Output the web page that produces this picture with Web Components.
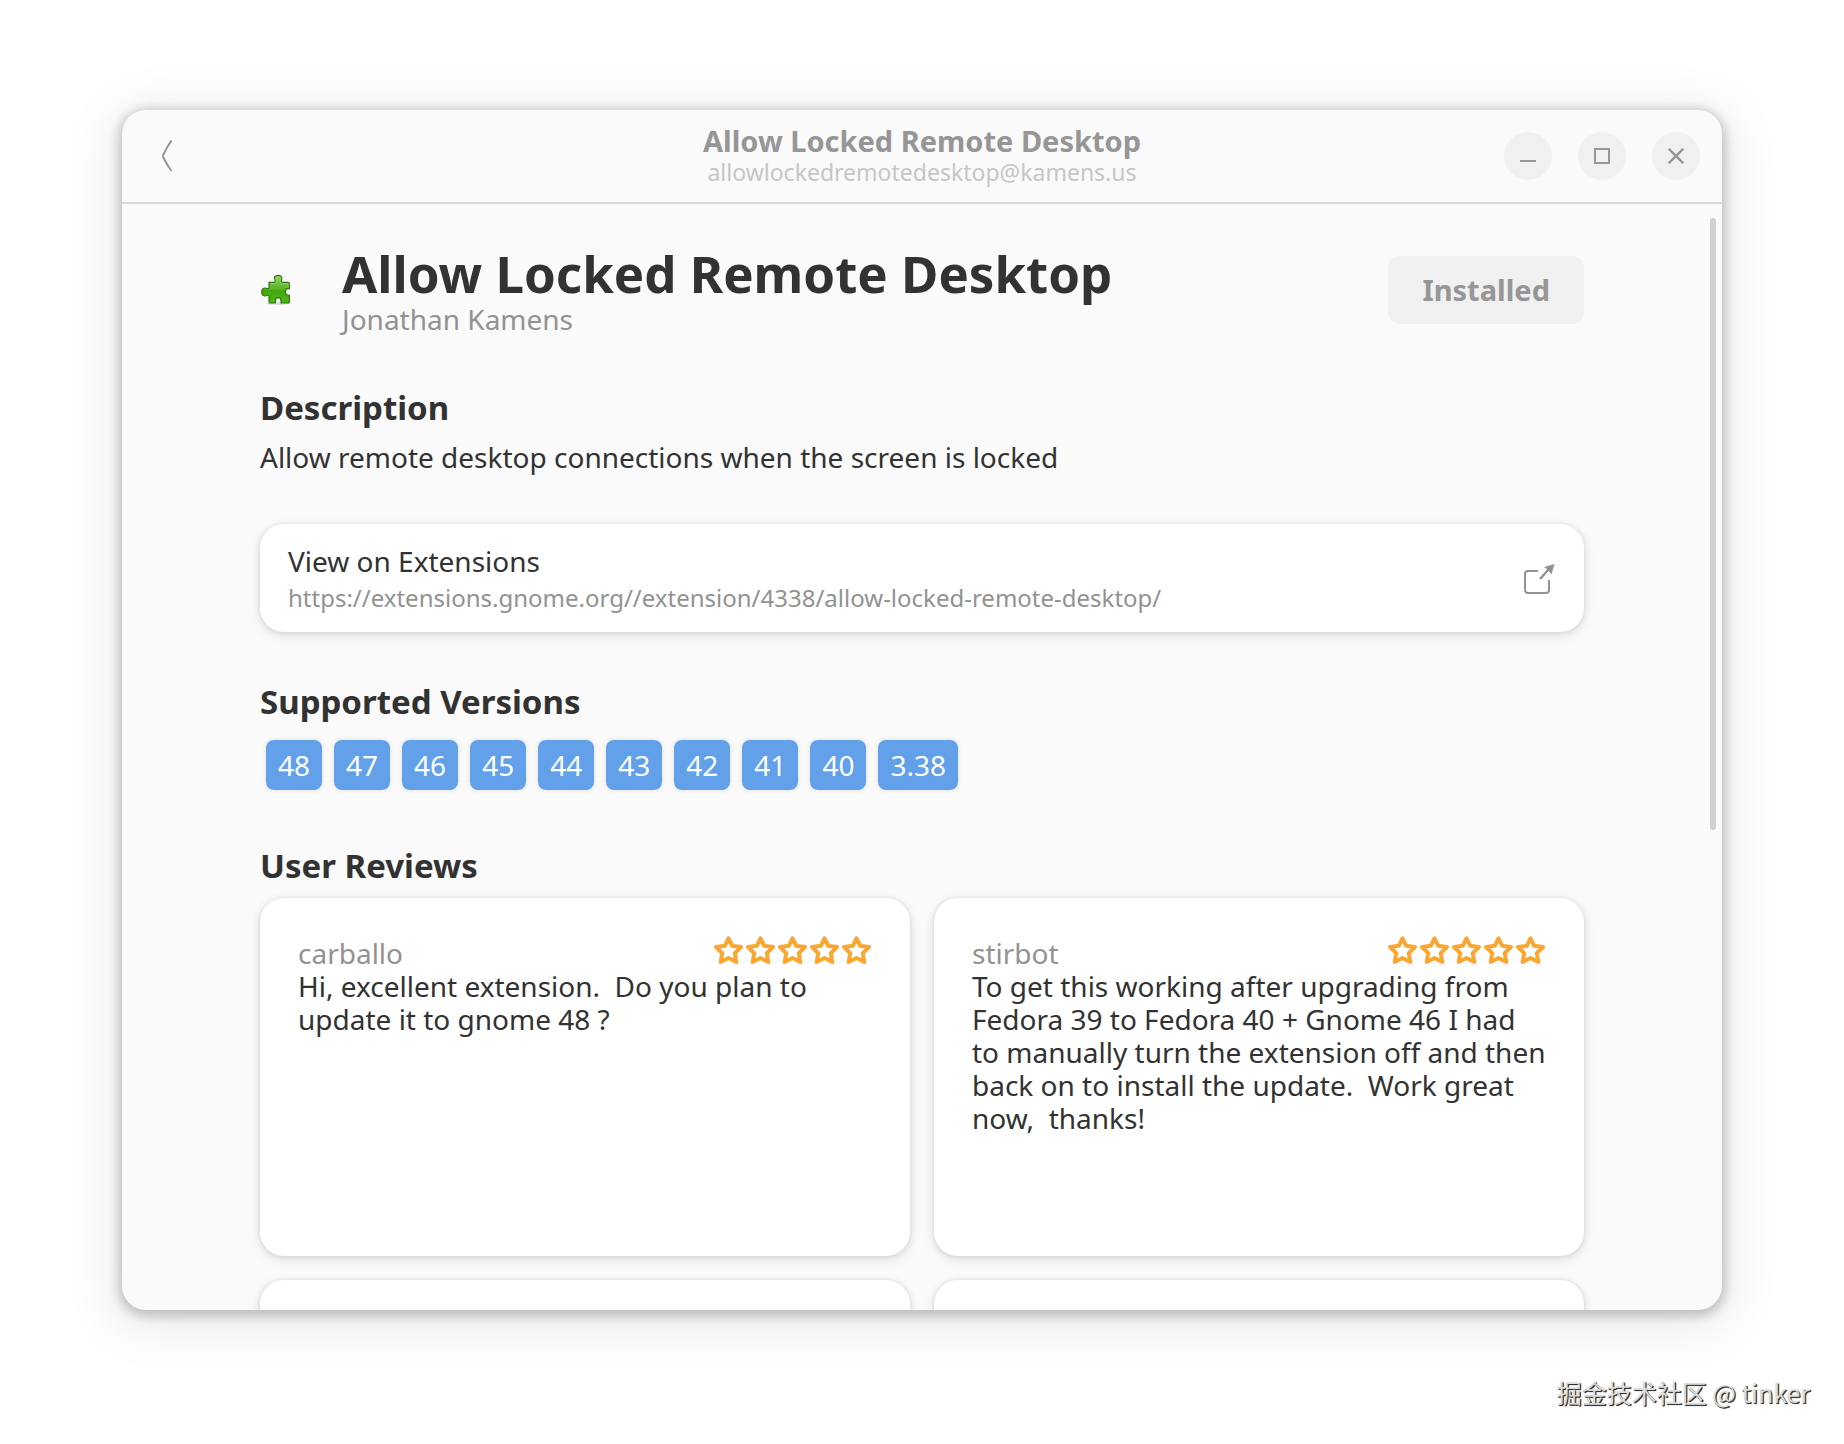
<!DOCTYPE html>
<html lang="en">
<head>
<meta charset="utf-8">
<title>Allow Locked Remote Desktop</title>
<style>
  body {
    margin: 0;
    height: 100vh;
    box-sizing: border-box;
    padding: 110px 122px 0;
    background: #fff;
    color: #323232;
    font-family: "Noto Sans", "Open Sans", sans-serif;
    font-size: 28px;
    line-height: 34px;
    overflow: hidden;
  }
</style>
</head>
<body>
  <app-window>
    <header-bar slot="header" heading="Allow Locked Remote Desktop" subtitle="allowlockedremotedesktop@kamens.us"></header-bar>

    <extension-hero heading="Allow Locked Remote Desktop" author="Jonathan Kamens"></extension-hero>

    <page-section heading="Description">Allow remote desktop connections when the screen is locked</page-section>

    <link-row heading="View on Extensions" href="https://extensions.gnome.org//extension/4338/allow-locked-remote-desktop/"></link-row>

    <page-section heading="Supported Versions">
      <version-list versions="48 47 46 45 44 43 42 41 40 3.38"></version-list>
    </page-section>

    <page-section heading="User Reviews">
      <review-grid>
        <review-card author="carballo">Hi, excellent extension.  Do you plan to update it to gnome 48 ?</review-card>
        <review-card author="stirbot">To get this working after upgrading from Fedora 39 to Fedora 40 + Gnome 46 I had to manually turn the extension off and then back on to install the update.  Work great now,  thanks!</review-card>
        <review-card></review-card>
        <review-card></review-card>
      </review-grid>
    </page-section>
  </app-window>

  <water-mark>掘金技术社区 @ tinker</water-mark>

<script>
class AppWindow extends HTMLElement {
  constructor() {
    super();
    this.attachShadow({ mode: "open" });
    this.shadowRoot.innerHTML = `
      <style>
        :host {
          display: flex;
          flex-direction: column;
          position: relative;
          height: calc(100vh - 244px);
          overflow: hidden;
          border-radius: 24px;
          background: #fafafa;
          box-shadow:
            0 3px 12px 3px rgba(0, 0, 0, 0.22),
            0 8px 50px 12px rgba(0, 0, 0, 0.08);
        }

        main {
          flex: 1;
          min-height: 0;
          display: flex;
          flex-direction: column;
          gap: 50px;
          padding: 40px 138px 0;
          overflow: hidden;
        }

        ::slotted(*) {
          flex-shrink: 0;
        }

        /* Overlay scrollbar */
        .thumb {
          position: absolute;
          top: 108px;
          right: 6px;
          width: 6px;
          height: 51%;
          border-radius: 3px;
          background: #d0d0d0;
        }
      </style>

      <slot name="header"></slot>
      <main><slot></slot></main>
      <div class="thumb"></div>
    `;
  }
}

class HeaderBar extends HTMLElement {
  constructor() {
    super();
    this.attachShadow({ mode: "open" });
  }

  connectedCallback() {
    this.render();
  }

  render() {
    this.shadowRoot.innerHTML = `
      <style>
        :host {
          display: grid;
          grid-template-columns: 1fr auto 1fr;
          align-items: center;
          height: 92px;
          padding: 0 22px;
          border-bottom: 2px solid #d9d9d9;
          color: #969696;
        }

        button {
          display: grid;
          place-items: center;
          width: 48px;
          height: 48px;
          padding: 0;
          border: 0;
          border-radius: 50%;
          background: #f0f0f0;
          color: inherit;
        }

        .back {
          background: none;
        }

        .titles {
          text-align: center;
        }

        .title {
          font-size: 29px;
          font-weight: 700;
          line-height: 32px;
        }

        .subtitle {
          color: #c6c6c6;
          font-size: 23px;
          line-height: 30px;
        }

        .controls {
          display: flex;
          justify-content: flex-end;
          gap: 26px;
        }

        svg {
          fill: none;
          stroke: currentColor;
          stroke-width: 2;
        }
      </style>

      <button class="back" aria-label="Back">
        <svg width="12" height="32" viewBox="0 0 12 32"><path d="M9.500 .5Q5 7 1.400 14.500Q.6 16 1.400 17.500Q5 25 9.500 31"/></svg>
      </button>
      <div class="titles">
        <div class="title">${this.getAttribute("heading")}</div>
        <div class="subtitle">${this.getAttribute("subtitle")}</div>
      </div>
      <div class="controls">
        <button aria-label="Minimize">
          <svg width="16" height="16" viewBox="0 0 16 16"><path d="M0 13H16"/></svg>
        </button>
        <button aria-label="Maximize">
          <svg width="16" height="16" viewBox="0 0 16 16"><path d="M1 1H15V15H1Z"/></svg>
        </button>
        <button aria-label="Close">
          <svg width="16" height="16" viewBox="0 0 16 16" style="stroke-width: 2.400"><path d="M.8 .8L15.200 15.200M15.200 .8L.8 15.200"/></svg>
        </button>
      </div>
    `;
  }
}

class ExtensionHero extends HTMLElement {
  constructor() {
    super();
    this.attachShadow({ mode: "open" });
  }

  connectedCallback() {
    this.render();
  }

  render() {
    this.shadowRoot.innerHTML = `
      <style>
        :host {
          display: flex;
          align-items: center;
          padding-bottom: 2px;
        }

        .text {
          flex: 1;
          margin-left: 50px;
        }

        h1 {
          margin: 0;
          font-size: 51px;
          line-height: 58px;
        }

        .author {
          color: #929292;
        }

        button {
          height: 68px;
          padding: 0 34px;
          border: 0;
          border-radius: 12px;
          background: #f0f0f0;
          color: #969696;
          font: inherit;
          font-size: 29px;
          font-weight: 700;
        }
      </style>

      <svg width="32" height="32" viewBox="30 28 96 96">
        <defs>
          <linearGradient id="green" x1="0" y1="0" x2="0" y2="1">
            <stop offset="0" stop-color="#8bd05a"/>
            <stop offset="0.500" stop-color="#59b52a"/>
            <stop offset="0.550" stop-color="#40a80c"/>
            <stop offset="1" stop-color="#4fb817"/>
          </linearGradient>
        </defs>
        <ellipse cx="86" cy="116" rx="36" ry="5" fill="#000" opacity="0.120"/>
        <path d="M57 53H72Q77 53 75 46Q71 41 74 36Q78 32 85 32Q92 32 95 37Q97 41 94 46Q92 53 97 53H114Q118 53 118 57V72H112Q106 73 106 81Q106 89 112 91H118V112Q118 115 114 115H93V107Q92 99 85 99Q77 99 76 107V115H61Q57 115 57 111V96Q57 90 52 92Q45 96 39 92Q35 88 35 82Q35 75 39 72Q45 68 51 72Q57 73 57 68Z" fill="url(#green)" stroke="#2a7608" stroke-width="3.500" stroke-linejoin="round"/>
        <path d="M61 57H73Q81 56 79 44Q76 37 85 36Q93 37 90 45Q88 56 97 57H114V69" fill="none" stroke="#b5e590" stroke-width="2" opacity="0.700"/>
      </svg>
      <div class="text">
        <h1>${this.getAttribute("heading")}</h1>
        <div class="author">${this.getAttribute("author")}</div>
      </div>
      <button disabled>Installed</button>
    `;
  }
}

class PageSection extends HTMLElement {
  constructor() {
    super();
    this.attachShadow({ mode: "open" });
  }

  connectedCallback() {
    this.shadowRoot.innerHTML = `
      <style>
        :host {
          display: block;
        }

        h2 {
          margin: 0 0 12px;
          font-size: 33px;
          line-height: 40px;
        }
      </style>

      <h2>${this.getAttribute("heading")}</h2>
      <slot></slot>
    `;
  }
}

class LinkRow extends HTMLElement {
  constructor() {
    super();
    this.attachShadow({ mode: "open" });
  }

  connectedCallback() {
    const href = this.getAttribute("href");

    this.shadowRoot.innerHTML = `
      <style>
        :host {
          display: block;
          border-radius: 24px;
          background: #fff;
          box-shadow:
            0 0 0 2px rgba(0, 0, 0, 0.02),
            0 2px 6px 2px rgba(0, 0, 0, 0.07),
            0 4px 12px 4px rgba(0, 0, 0, 0.03);
        }

        a {
          display: flex;
          align-items: center;
          justify-content: space-between;
          padding: 18px 28px 16px;
          color: inherit;
          line-height: 38px;
          text-decoration: none;
        }

        .url {
          color: #929292;
          font-size: 24px;
          line-height: 36px;
        }
      </style>

      <a href="${href}">
        <div>
          <div>${this.getAttribute("heading")}</div>
          <div class="url">${href}</div>
        </div>
        <svg width="32" height="32" viewBox="0 0 32 32" fill="none" stroke="#929292" stroke-width="2">
          <path d="M14 8H4Q1 8 1 11V27Q1 30 4 30H22Q25 30 25 27V17"/>
          <path d="M16 16L25 6" stroke-width="2.400"/>
          <path d="M30.500 1L20 4L24 7L27.500 11.500Z" fill="#929292" stroke="none"/>
        </svg>
      </a>
    `;
  }
}

class VersionList extends HTMLElement {
  constructor() {
    super();
    this.attachShadow({ mode: "open" });
  }

  connectedCallback() {
    const versions = this.getAttribute("versions").split(" ");

    this.shadowRoot.innerHTML = `
      <style>
        :host {
          display: flex;
          flex-wrap: wrap;
          gap: 12px;
          padding: 6px;
        }

        span {
          padding: 0 12px;
          border-radius: 8px;
          background: #62a0ea;
          box-shadow: 0 0 4px 1px rgba(0, 0, 0, 0.08);
          color: #fff;
          line-height: 50px;
        }
      </style>

      ${versions.map((version) => `<span>${version}</span>`).join("")}
    `;
  }
}

class ReviewGrid extends HTMLElement {
  constructor() {
    super();
    this.attachShadow({ mode: "open" });
    this.shadowRoot.innerHTML = `
      <style>
        :host {
          display: grid;
          grid-template-columns: 1fr 1fr;
          gap: 24px;
        }
      </style>
      <slot></slot>
    `;
  }
}

class ReviewCard extends HTMLElement {
  constructor() {
    super();
    this.attachShadow({ mode: "open" });
  }

  connectedCallback() {
    const author = this.getAttribute("author");

    this.shadowRoot.innerHTML = `
      <style>
        :host {
          display: block;
          min-height: 358px;
          box-sizing: border-box;
          padding: 38px;
          border-radius: 24px;
          background: #fff;
          box-shadow:
            0 0 0 2px rgba(0, 0, 0, 0.02),
            0 2px 6px 2px rgba(0, 0, 0, 0.07),
            0 4px 12px 4px rgba(0, 0, 0, 0.03);
        }

        header {
          display: flex;
          justify-content: space-between;
          color: #929292;
        }

        p {
          margin: 0;
          line-height: 33px;
          white-space: pre-wrap;
        }
      </style>

      ${author ? `<header><span>${author}</span><star-rating></star-rating></header>` : ""}
      <p><slot></slot></p>
    `;
  }
}

class StarRating extends HTMLElement {
  constructor() {
    super();
    this.attachShadow({ mode: "open" });
    const star = `
      <svg width="30" height="30" viewBox="0 0 30 30">
        <path d="M14.500 2.300L18.200 9.800L27 11L20.800 17.200L22.300 26L14.500 22L6.700 26L8.200 17.200L2 11L10.800 9.800Z"/>
      </svg>
    `;

    this.shadowRoot.innerHTML = `
      <style>
        :host {
          display: flex;
          gap: 2px;
        }

        svg {
          fill: none;
          stroke: #f9a633;
          stroke-width: 4;
          stroke-linejoin: round;
        }
      </style>
      ${star.repeat(5)}
    `;
  }
}

class WaterMark extends HTMLElement {
  constructor() {
    super();
    this.attachShadow({ mode: "open" });
    this.shadowRoot.innerHTML = `
      <style>
        :host {
          position: absolute;
          right: 34px;
          bottom: 35px;
          color: #dcdcdc;
          font-family: "Noto Sans CJK SC", sans-serif;
          font-size: 25px;
          text-shadow: 1px 1px 0 #333, 1px 1px 1px #222;
        }
      </style>
      <slot></slot>
    `;
  }
}

customElements.define("app-window", AppWindow);
customElements.define("header-bar", HeaderBar);
customElements.define("extension-hero", ExtensionHero);
customElements.define("page-section", PageSection);
customElements.define("link-row", LinkRow);
customElements.define("version-list", VersionList);
customElements.define("review-grid", ReviewGrid);
customElements.define("star-rating", StarRating);
customElements.define("review-card", ReviewCard);
customElements.define("water-mark", WaterMark);
</script>
</body>
</html>
